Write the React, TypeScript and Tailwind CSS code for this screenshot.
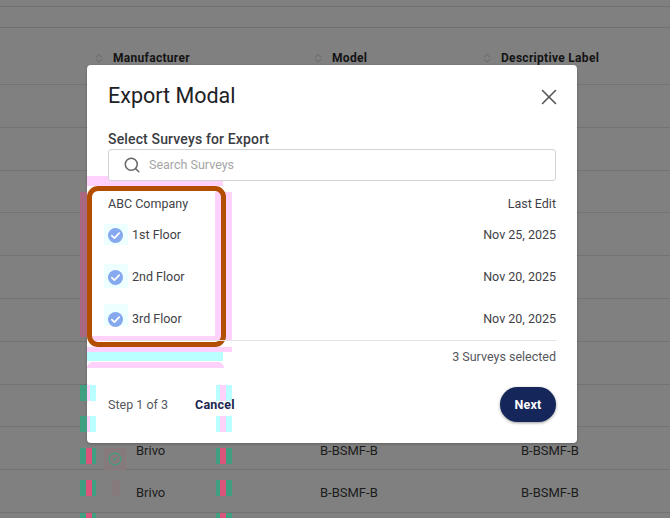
import { ChevronDown, ChevronUp, CircleCheck, Search, X } from 'lucide-react';

// only the last two rows show from under the modal
const rows = [
  { y: 85, text: false },
  { y: 128, text: false },
  { y: 171, text: false },
  { y: 214, text: false },
  { y: 257, text: false },
  { y: 299, text: false },
  { y: 342, text: false },
  { y: 385, text: false },
  { y: 428, text: true },
  { y: 470, text: true },
];

function SortIcon() {
  return (
    <span className="flex h-[16px] w-[14px] flex-col items-center justify-center text-[#636363]">
      <ChevronUp size={16} strokeWidth={1.8} className="-mb-[7px]" />
      <ChevronDown size={16} strokeWidth={1.8} />
    </span>
  );
}

function Check() {
  return (
    <svg width="15" height="15" viewBox="0 0 15 15" className="shrink-0">
      <circle cx="7.5" cy="7.5" r="7.5" fill="#85a8ee" />
      <path d="M3.8 7.6 L6.4 10.1 L11.2 5.2" fill="none" stroke="#ffffff" strokeWidth="1.7" strokeLinecap="round" strokeLinejoin="round" />
    </svg>
  );
}

function SurveyRow({ name, date }: { name: string; date: string }) {
  return (
    <div className="flex h-[42px] items-center justify-between text-[12.5px] text-[#3f4147]">
      <div className="flex items-center gap-[9px]">
        <Check />
        <span>{name}</span>
      </div>
      <span>{date}</span>
    </div>
  );
}

// colour noise bands left in the source image, plus the orange highlight
function Overlay() {
  const inner = [
    [385, 16],
    [416, 16],
  ];
  const outer = [
    [448, 16],
    [480, 16],
    [513, 5],
  ];
  return (
    <div className="absolute -left-[87px] -top-[65px] h-[518px] w-[670px]">
      <div className="absolute left-[87px] top-[176px] h-[10px] w-[136px] bg-[#ffd2fb]" />
      <div className="absolute left-[80px] top-[192px] h-[145px] w-[7px] bg-[#a8687f]" />
      <div className="absolute left-[215px] top-[192px] h-[149px] w-[17px] bg-[#ffd2fb]" />
      <div className="absolute left-[92px] top-[336px] h-[5px] w-[128px] bg-[#ffd2fb]" />
      <div className="absolute left-[87px] top-[347px] h-[5px] w-[145px] bg-[#ffd2fb]" />
      <div className="absolute left-[87px] top-[352px] h-[9px] w-[136px] bg-[#b9ffff]" />
      <div className="absolute left-[87px] top-[362px] h-[6px] w-[137px] rounded-t-[6px] bg-[#ffd2fb]" />
      {inner.map(([top, h]) => (
        <div key={top} className="absolute left-0 flex" style={{ top, height: h }}>
          <div className="ml-[80px] w-[7px] bg-[#3f9f80]" />
          <div className="w-[3px] bg-[#ffd2fb]" />
          <div className="w-[6px] bg-[#b9ffff]" />
          <div className="ml-[120px] w-[4px] bg-[#b9ffff]" />
          <div className="w-[6px] bg-[#ffd2fb]" />
          <div className="w-[6px] bg-[#b9ffff]" />
        </div>
      ))}
      {outer.map(([top, h]) => (
        <div key={top} className="absolute left-0 flex" style={{ top, height: h }}>
          <div className="ml-[80px] w-[6px] bg-[#3f9f80]" />
          <div className="w-[6px] bg-[#d9557c]" />
          <div className="w-[4px] bg-[#3f9f80]" />
          <div className="ml-[120px] w-[4px] bg-[#3f9f80]" />
          <div className="w-[6px] bg-[#d9557c]" />
          <div className="w-[6px] bg-[#3f9f80]" />
        </div>
      ))}
      <div className="absolute left-[104px] top-[448px] flex h-[22px] w-[22px] items-center justify-center bg-[#877a7c]">
        <CircleCheck size={14} strokeWidth={2} className="text-[#3f9f80]" />
      </div>
      <div className="absolute left-[112px] top-[480px] h-[16px] w-[8px] bg-[#877a7c]" />
      <div className="absolute left-[104px] top-[224px] h-[21px] w-[24px] bg-[#eeffff]" />
      <div className="absolute left-[104px] top-[264px] h-[24px] w-[24px] bg-[#eeffff]" />
      <div className="absolute left-[104px] top-[304px] h-[22px] w-[24px] bg-[#eeffff]" />
      <div className="absolute left-[87px] top-[186px] h-[161px] w-[139px] rounded-[11px] border-[5px] border-[#b34d00]" />
    </div>
  );
}

export default function App() {
  return (
    <div className="relative h-[518px] w-[670px] overflow-hidden bg-[#808080] font-['Roboto',sans-serif]">
      {/* Table behind the modal */}
      <div className="h-[7px] border-b border-[#707070]" />
      <div className="h-[21px] border-b border-[#707070]" />
      <div className="flex h-[57px] items-center border-b border-[#737373] pl-[92px] pt-[4px] text-[12px] font-bold tracking-[0.3px] text-[#141414]">
        <div className="flex w-[219px] items-center gap-[7px]">
          <SortIcon />
          Manufacturer
        </div>
        <div className="flex w-[169px] items-center gap-[7px]">
          <SortIcon />
          Model
        </div>
        <div className="flex items-center gap-[7px]">
          <SortIcon />
          Descriptive Label
        </div>
      </div>
      {rows.map((row) => (
        <div key={row.y} className="flex h-[42.8px] items-center border-b border-[#737373] pl-[136px] pt-[4px] text-[13px] text-[#1c1c1c]">
          {row.text && (
            <>
              <span className="w-[184px]">Brivo</span>
              <span className="w-[201px]">B-BSMF-B</span>
              <span>B-BSMF-B</span>
            </>
          )}
        </div>
      ))}

      {/* Modal */}
      <div className="absolute left-[87px] top-[65px] flex h-[378px] w-[490px] flex-col rounded-[4px] bg-white px-[21px] pt-[16px] shadow-[0_1px_3px_rgba(0,0,0,0.25)]">
        <Overlay />
        <div className="relative z-10 flex h-[30px] items-center justify-between pt-[1px]">
          <h2 className="text-[21.5px] font-normal text-[#202124]">Export Modal</h2>
          <X size={26} strokeWidth={1.5} className="-mr-[6px] text-[#555555]" />
        </div>
        <div className="relative z-10 mt-[20px] h-[16px] text-[14px] font-medium leading-[16px] tracking-[0.15px] text-[#3a3c42]">Select Surveys for Export</div>
        <div className="relative z-10 mt-[2px] flex h-[32px] items-center gap-[8px] rounded-[3px] border border-[#d4d4d4] bg-white pl-[14px]">
          <Search size={18} strokeWidth={2} className="text-[#666666]" />
          <span className="text-[12.5px] text-[#a5a5a5]">Search Surveys</span>
        </div>
        <div className="relative z-10 mt-[13px] flex h-[20px] items-center justify-between text-[12.5px] text-[#3f4147]">
          <span>ABC Company</span>
          <span>Last Edit</span>
        </div>
        <div className="relative z-10">
          <SurveyRow name="1st Floor" date="Nov 25, 2025" />
          <SurveyRow name="2nd Floor" date="Nov 20, 2025" />
          <SurveyRow name="3rd Floor" date="Nov 20, 2025" />
        </div>
        <div className="relative z-10 border-t border-[#e4e4e4] pt-[8px] text-right text-[12.5px] leading-[16px] text-[#55575c]">
          3 Surveys selected
        </div>
        <div className="relative z-10 mt-[22px] flex items-center justify-between">
          <div className="flex items-center gap-[27px] pt-[1px]">
            <span className="text-[12.5px] text-[#55575c]">Step 1 of 3</span>
            <span className="text-[12.5px] font-bold tracking-[0.2px] text-[#1b2650]">Cancel</span>
          </div>
          <button className="h-[35px] w-[56px] rounded-full bg-[#14265a] pt-[1px] text-[12.5px] font-bold tracking-[0.2px] text-white shadow-[0_1px_3px_rgba(0,0,0,0.4)]">
            Next
          </button>
        </div>
      </div>
    </div>
  );
}
